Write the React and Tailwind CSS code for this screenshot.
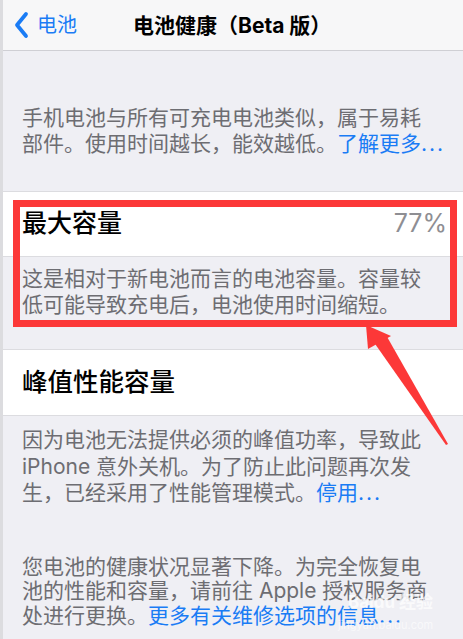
export default function App() {
  const font = { fontFamily: 'Inter, "Noto Sans CJK SC", sans-serif' };
  return (
    <div
      className="relative w-[463px] h-[639px] overflow-hidden bg-[#efeff4] border-l-[3px] border-[#dcdcdf]"
      style={font}
    >
      {/* Nav bar */}
      <div className="h-[51px] bg-[#f7f7f8] border-b border-[#cfcfd4] flex items-center">
        <div className="flex items-center pl-[11px] text-[#1a7cf5]">
          <svg width="16" height="28" viewBox="0 0 16 28" className="mr-[7px]">
            <polyline
              points="12,3 3,14 12,25"
              fill="none"
              stroke="#1a7cf5"
              strokeWidth="3.8"
              strokeLinecap="round"
              strokeLinejoin="round"
            />
          </svg>
          <span className="text-[20px] leading-none">电池</span>
        </div>
        <div className="ml-[56px] text-[21px] font-bold text-black leading-none whitespace-nowrap">
          电池健康（Beta 版）
        </div>
      </div>

      {/* Intro */}
      <div className="pl-[19px] pt-[54px] pb-[34px] border-b border-[#dcdce0] text-[21px] leading-[26px] text-[#6d6d72] whitespace-nowrap">
        手机电池与所有可充电电池类似，属于易耗
        <br />
        部件。使用时间越长，能效越低。<span className="text-[#1a7cf5]">了解更多<span className="tracking-[2px]">...</span></span>
      </div>

      {/* Max capacity row */}
      <div className="h-[65px] bg-white border-b border-[#dcdce0] flex items-center justify-between pl-[19px] pr-[16px]">
        <span className="text-[25px] font-medium text-black">最大容量</span>
        <span className="text-[25px] text-[#8e8e93]">77%</span>
      </div>
      <div className="pl-[19px] pt-[9px] pb-[31px] border-b border-[#dcdce0] text-[21px] leading-[26px] text-[#6d6d72] whitespace-nowrap">
        这是相对于新电池而言的电池容量。容量较
        <br />
        低可能导致充电后，电池使用时间缩短。
      </div>

      {/* Peak performance row */}
      <div className="h-[66px] bg-white border-b border-[#dcdce0] flex items-center pl-[19px]">
        <span className="text-[25.5px] font-medium text-black">峰值性能容量</span>
      </div>
      <div className="pl-[19px] pt-[11px] text-[21px] leading-[26.5px] text-[#6d6d72] whitespace-nowrap">
        因为电池无法提供必须的峰值功率，导致此
        <br />
        iPhone 意外关机。为了防止此问题再次发
        <br />
        生，已经采用了性能管理模式。<span className="text-[#1a7cf5]">停用<span className="tracking-[2px]">...</span></span>
      </div>

      <div className="pl-[19px] pt-[48px] text-[21px] leading-[24.5px] text-[#6d6d72] whitespace-nowrap">
        您电池的健康状况显著下降。为完全恢复电
        <br />
        池的性能和容量，请前往 Apple 授权服务商
        <br />
        处进行更换。<span className="text-[#1a7cf5]">更多有关维修选项的信息<span className="tracking-[2px]">...</span></span>
      </div>

      {/* Red annotation box */}
      <div className="absolute left-[10px] top-[200px] w-[444px] h-[127px] border-[7px] border-[#fc3838] pointer-events-none" />

      {/* Red arrow */}
      <svg
        className="absolute left-[-3px] top-0 pointer-events-none"
        width="463"
        height="639"
        viewBox="0 0 463 639"
      >
        <polygon points="366,325 368,349 391,336" fill="#fc3838" />
        <polygon points="373,341 386,335 448,444 446,445" fill="#fc3838" />
      </svg>

      {/* Watermark */}
      <div className="absolute left-[345px] top-[594px] text-[17px] font-bold text-white/70 leading-none whitespace-nowrap pointer-events-none">
        Baidu 经验
      </div>
      <div className="absolute left-[335px] top-[620px] text-[11px] text-white/60 leading-none whitespace-nowrap pointer-events-none">
        jingyan.baidu.com
      </div>
    </div>
  );
}
